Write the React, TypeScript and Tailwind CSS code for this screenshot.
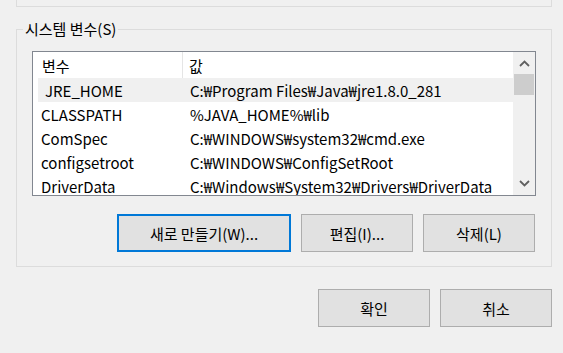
import React from "react";

const rows = [
  { name: "JRE_HOME", value: "C:₩Program Files₩Java₩jre1.8.0_281", selected: true },
  { name: "CLASSPATH", value: "%JAVA_HOME%₩lib" },
  { name: "ComSpec", value: "C:₩WINDOWS₩system32₩cmd.exe" },
  { name: "configsetroot", value: "C:₩WINDOWS₩ConfigSetRoot" },
  { name: "DriverData", value: "C:₩Windows₩System32₩Drivers₩DriverData" },
];

function Chevron({ up }: { up?: boolean }) {
  return (
    <svg width="11" height="7" viewBox="0 0 11 7" className="block">
      <polyline
        points={up ? "1,6 5.5,1.5 10,6" : "1,1 5.5,5.5 10,1"}
        fill="none"
        stroke="#606060"
        strokeWidth="1.8"
      />
    </svg>
  );
}

function Button({ label, w, primary }: { label: string; w: string; primary?: boolean }) {
  return (
    <button
      className={`${w} h-[38px] flex items-center justify-center bg-[#e1e1e1] text-[15px] text-black ${
        primary ? "border-2 border-[#0078d7]" : "border border-[#adadad]"
      }`}
    >
      {label}
    </button>
  );
}

export default function App() {
  return (
    <div className="w-[563px] h-[353px] overflow-hidden bg-[#f0f0f0] text-[15px] text-black font-['Noto_Sans_CJK_KR',sans-serif] leading-none">
      {/* Previous panel edge */}
      <div className="ml-4 w-[536px] h-[7px] border-x border-b border-[#dcdcdc]" />

      {/* System variables group */}
      <div className="relative ml-4 mt-[22px] w-[536px] border border-[#dcdcdc] pt-[21px] pl-[15px] pr-[16px] pb-[14px]">
        <span className="absolute left-[6px] top-[-10px] px-[2px] bg-[#f0f0f0] leading-[18px]">
          시스템 변수(S)
        </span>

        {/* List view */}
        <div className="w-[504px] h-[145px] border border-[#828790] bg-white flex overflow-hidden">
          <div className="flex-1 flex flex-col overflow-hidden">
            <div className="h-[26px] flex items-center shrink-0">
              <div className="w-[150px] h-full flex items-center pl-[9px] border-r border-[#e5e5e5]">변수</div>
              <div className="pl-[6px]">값</div>
            </div>
            {rows.map((r) => (
              <div
                key={r.name}
                className={`h-[24px] shrink-0 flex items-center whitespace-nowrap ${
                  r.selected ? "ml-[5px] bg-[#f0f0f0]" : ""
                }`}
              >
                <div className={r.selected ? "w-[152px] pl-[7px]" : "w-[157px] pl-[8px]"}>{r.name}</div>
                <div>{r.value}</div>
              </div>
            ))}
          </div>

          {/* Scrollbar */}
          <div className="w-[22px] bg-[#f0f0f0] flex flex-col items-center">
            <div className="h-[22px] flex items-center justify-center">
              <Chevron up />
            </div>
            <div className="w-[20px] h-[21px] bg-[#cdcdcd]" />
            <div className="flex-1" />
            <div className="h-[24px] flex items-center justify-center">
              <Chevron />
            </div>
          </div>
        </div>

        <div className="mt-[18px] flex justify-end gap-[10px]">
          <Button label="새로 만들기(W)..." w="w-[174px]" primary />
          <Button label="편집(I)..." w="w-[112px]" />
          <Button label="삭제(L)" w="w-[112px]" />
        </div>
      </div>

      {/* Dialog buttons */}
      <div className="mt-[22px] pr-[11px] flex justify-end gap-[10px]">
        <Button label="확인" w="w-[112px]" />
        <Button label="취소" w="w-[112px]" />
      </div>
    </div>
  );
}
